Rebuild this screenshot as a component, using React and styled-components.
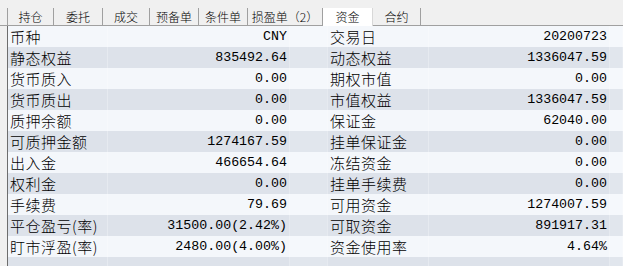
import React from 'react';
import styled, { createGlobalStyle } from 'styled-components';

const GlobalStyle = createGlobalStyle`
  html, body {
    margin: 0;
    padding: 0;
    background: #f0f0f0;
    overflow: hidden;
  }
`;

const Panel = styled.div`
  width: 623px;
  height: 266px;
  overflow: hidden;
  background: #f0f0f0;
  font-family: "Noto Sans CJK SC", "Noto Sans", sans-serif;
  color: #000;
`;

const TabBar = styled.div`
  display: flex;
  align-items: flex-end;
  height: 26px;
  padding-left: 7px;
  border-bottom: 1px solid #a0a0a0;
  box-sizing: border-box;
`;

const Tab = styled.div`
  width: ${(p) => p.w}px;
  height: ${(p) => (p.active ? 18 : 17)}px;
  margin-bottom: ${(p) => (p.active ? -1 : 0)}px;
  box-sizing: border-box;
  display: flex;
  align-items: center;
  justify-content: center;
  font-size: 12px;
  font-weight: 300;
  line-height: 1;
  background: ${(p) => (p.active ? '#ffffff' : 'transparent')};
  border-right: 1px solid ${(p) => (p.active ? '#d8d8d8' : '#a0a0a0')};
  border-left: ${(p) => (p.first ? '1px solid #a0a0a0' : 'none')};
  position: relative;
  z-index: ${(p) => (p.active ? 1 : 0)};
`;

const Table = styled.div`
  margin-left: 7px;
  border-left: 1px solid #6d6d6d;
`;

const Row = styled.div`
  display: grid;
  grid-template-columns: 100px 182px 38px 101px 181px 1fr;
  height: 21px;
  background: ${(p) => (p.dark ? '#dde2ea' : '#f4f7fb')};
`;

const Cell = styled.div`
  display: flex;
  align-items: center;
  overflow: hidden;
  white-space: nowrap;
  border-right: 1px solid ${(p) => (p.dark ? '#e6eaf0' : '#f7f9fc')};
`;

const Label = styled(Cell)`
  padding-left: 2px;
  font-size: 15px;
  font-weight: 300;
  letter-spacing: 0.5px;
`;

const Value = styled(Cell)`
  justify-content: flex-end;
  padding-right: 2px;
  font-family: "Liberation Mono", "DejaVu Sans Mono", monospace;
  font-size: 13.3px;
`;

const Spacer = styled(Cell)`
  background: ${(p) => (p.dark ? '#e1e6ed' : '#f5f8fc')};
`;

const tabs = [
  ['持仓', 47],
  ['委托', 49],
  ['成交', 47],
  ['预备单', 49],
  ['条件单', 49],
  ['损盈单（2）', 75],
  ['资金', 50],
  ['合约', 48],
];

const rows = [
  ['币种', 'CNY', '交易日', '20200723'],
  ['静态权益', '835492.64', '动态权益', '1336047.59'],
  ['货币质入', '0.00', '期权市值', '0.00'],
  ['货币质出', '0.00', '市值权益', '1336047.59'],
  ['质押余额', '0.00', '保证金', '62040.00'],
  ['可质押金额', '1274167.59', '挂单保证金', '0.00'],
  ['出入金', '466654.64', '冻结资金', '0.00'],
  ['权利金', '0.00', '挂单手续费', '0.00'],
  ['手续费', '79.69', '可用资金', '1274007.59'],
  ['平仓盈亏(率)', '31500.00(2.42%)', '可取资金', '891917.31'],
  ['盯市浮盈(率)', '2480.00(4.00%)', '资金使用率', '4.64%'],
  ['', '', '', ''],
];

const App = () => {
  return (
    <Panel>
      <GlobalStyle />
      <TabBar>
        {tabs.map(([name, w], i) => (
          <Tab key={name} w={w} first={i === 0} active={name === '资金'}>
            {name}
          </Tab>
        ))}
      </TabBar>
      <Table>
        {rows.map((r, i) => {
          const dark = i % 2 === 1;
          return (
            <Row key={i} dark={dark}>
              <Label dark={dark}>{r[0]}</Label>
              <Value dark={dark}>{r[1]}</Value>
              <Spacer dark={dark} />
              <Label dark={dark}>{r[2]}</Label>
              <Value dark={dark}>{r[3]}</Value>
              <Spacer dark={dark} />
            </Row>
          );
        })}
      </Table>
    </Panel>
  );
};

export default App;
